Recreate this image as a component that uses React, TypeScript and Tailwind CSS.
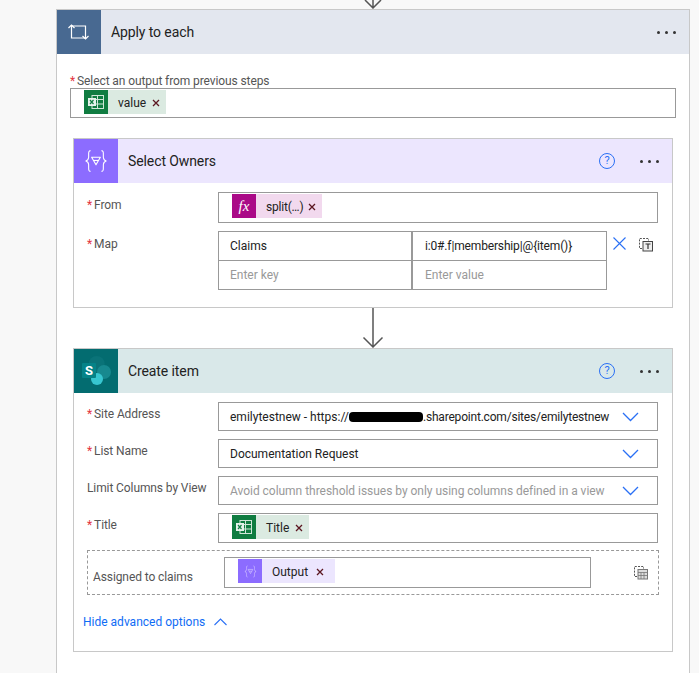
import type { ReactNode } from "react";

const fontFamily = "font-['Roboto','Noto_Sans',sans-serif]";

function LoopIcon() {
  return (
    <svg width="22" height="16" viewBox="0 0 22 16" fill="none" stroke="white" strokeWidth="1.2">
      <path d="M3.5 1v13H18" />
      <path d="M0.5 4l3-3 3 3" />
      <path d="M3.5 2h14v13" />
      <path d="M14.5 12l3 3 3-3" />
    </svg>
  );
}

function SelectIcon({ size = 24, color = "white" }: { size?: number; color?: string }) {
  return (
    <svg width={size} height={size} viewBox="0 0 22 22" fill="none" stroke={color} strokeWidth="1">
      <path d="M6 1.5C3.5 1.5 4.5 5 4.2 8c-.2 1.7-1 2.6-2.7 3 1.7.4 2.5 1.3 2.7 3 .3 3-.7 6.5 1.8 6.5" />
      <path d="M16 1.5c2.5 0 1.5 3.5 1.8 6.5.2 1.7 1 2.6 2.7 3-1.7.4-2.5 1.3-2.7 3-.3 3 .7 6.5-1.8 6.5" />
      <path d="M7 7.5h8L11 14.5z" strokeLinejoin="round" />
      <path d="M9 10.5h4" />
    </svg>
  );
}

function ExcelIcon() {
  return (
    <svg width="16" height="14" viewBox="0 0 16 14">
      <rect x="4" y="0.5" width="11.5" height="13" fill="none" stroke="#cfe6d8" strokeWidth="1" />
      <path d="M4 4.5h11.5M4 9h11.5M9.5 0.5v13" stroke="#cfe6d8" strokeWidth="1" />
      <rect x="0" y="3" width="8" height="8" fill="#e6f3ec" />
      <path d="M2 5l3.5 4M5.5 5L2 9" stroke="#107c41" strokeWidth="1.2" />
    </svg>
  );
}

function SharePointIcon() {
  return (
    <svg width="32" height="34" viewBox="0 0 32 34">
      <circle cx="16.7" cy="10" r="8" fill="#0a7378" />
      <circle cx="24" cy="18" r="7" fill="#17898f" />
      <circle cx="17" cy="25" r="6" fill="#37c6d0" />
      <rect x="2" y="9" width="14" height="15" rx="1" fill="#058388" />
      <text x="9" y="21" textAnchor="middle" fontSize="13" fontWeight="700" fill="white" className={fontFamily}>
        S
      </text>
    </svg>
  );
}

function PasteIcon({ children }: { children: ReactNode }) {
  return (
    <svg width="16" height="15" viewBox="0 0 16 15" fill="none">
      <path d="M4 11.5H1.5V1.5h9v2" stroke="#555" strokeWidth="1" strokeDasharray="2 1.2" />
      {children}
    </svg>
  );
}

function HelpIcon() {
  return (
    <div className="w-4 h-4 rounded-full border border-[#2a70f5] text-[#2a70f5] text-[11px] flex items-center justify-center mr-[25px]">
      ?
    </div>
  );
}

function Dots() {
  return (
    <div className="flex gap-[5px] mr-[13px]">
      <div className="w-[3px] h-[3px] rounded-full bg-[#333]" />
      <div className="w-[3px] h-[3px] rounded-full bg-[#333]" />
      <div className="w-[3px] h-[3px] rounded-full bg-[#333]" />
    </div>
  );
}

function Token(props: {
  icon: ReactNode;
  iconBg: string;
  bg: string;
  label: string;
  className?: string;
  labelClass?: string;
}) {
  return (
    <div className={`flex items-center h-6 ${props.bg} ${props.className ?? ""}`}>
      <div className={`w-6 h-6 flex items-center justify-center ${props.iconBg}`}>{props.icon}</div>
      <span className={`text-xs text-[#222] pl-[10px] pt-[1px] ${props.labelClass ?? ""}`}>{props.label}</span>
      <svg width="8" height="8" viewBox="0 0 8 8" stroke="#5b1620" strokeWidth="1.3" className="ml-[6px] mr-[6px] mt-[1px]">
        <path d="M1 1l6 6M7 1L1 7" />
      </svg>
    </div>
  );
}

function Label({ text, required, pt = "pt-[4px]" }: { text: string; required?: boolean; pt?: string }) {
  return (
    <div className={`w-[144px] pl-[13px] text-xs text-[#555] shrink-0 leading-[16px] ${pt} whitespace-nowrap tracking-[-0.1px]`}>
      {required && <span className="text-[#e3343f] mr-[2px]">*</span>}
      {text}
    </div>
  );
}

function Field({ h = "h-[29px]", children }: { h?: string; children: ReactNode }) {
  return (
    <div className={`flex-1 ${h} border border-[#999] flex items-center pl-[11px] pr-[18px] text-xs text-[#222]`}>
      {children}
    </div>
  );
}

// field that holds a dynamic-content token: the token sits near the top edge
function TokenField({ className, children }: { className: string; children: ReactNode }) {
  return <div className={`border border-[#999] flex items-start pt-[1px] pl-[13px] ${className}`}>{children}</div>;
}

function CardHeader(props: { icon: ReactNode; iconBg: string; bg: string; title: string; help?: boolean }) {
  return (
    <div className={`flex items-center h-[44px] ${props.bg}`}>
      <div className={`w-[44px] h-[44px] flex items-center justify-center ${props.iconBg}`}>{props.icon}</div>
      <h2 className="flex-1 text-[14px] text-[#222] pl-[10px] tracking-[-0.1px]">{props.title}</h2>
      {props.help && <HelpIcon />}
      <Dots />
    </div>
  );
}

function Chevron() {
  return (
    <svg width="17" height="10" viewBox="0 0 17 10" fill="none" stroke="#2a70f5" strokeWidth="1.3" className="ml-auto shrink-0">
      <path d="M1 1l7.5 7.5L16 1" />
    </svg>
  );
}

export default function App() {
  return (
    <div className={`${fontFamily} w-[699px] h-[673px] overflow-hidden bg-[#f8f8f8]`}>
      <div className="h-[9px] overflow-hidden flex justify-center pl-[47px]">
        <svg width="18" height="9" viewBox="0 0 18 9" fill="none" stroke="#555" strokeWidth="1.5">
          <path d="M9 0v8M1 0l8 8 8-8" />
        </svg>
      </div>
      <div className="ml-[56px] w-[634px] h-[700px] bg-white border border-[#c8c8c8]">
        <CardHeader icon={<LoopIcon />} iconBg="bg-[#486991]" bg="bg-[#e3e7ef]" title="Apply to each" />

        <div className="mt-[20px] h-[14px] ml-[13px] text-xs leading-[14px] text-[#555] tracking-[-0.1px]">
          <span className="text-[#e3343f] mr-[2px]">*</span>Select an output from previous steps
        </div>
        <TokenField className="ml-[13px] w-[606px] h-[30px]">
          <Token icon={<ExcelIcon />} iconBg="bg-[#107c41]" bg="bg-[#dbeae1]" label="value" />
        </TokenField>

        <div className="mt-[20px] ml-[16px] w-[600px] border border-[#c8c8c8]">
          <CardHeader icon={<SelectIcon />} iconBg="bg-[#8c6cff]" bg="bg-[#ece6fe]" title="Select Owners" help />
          <div className="pt-[9px] pr-[14px] h-[124px]">
            <div className="flex">
              <Label text="From" required pt="pt-[5px]" />
              <TokenField className="flex-1 h-[31px]">
                <Token
                  icon={<span className="font-['Liberation_Serif',serif] italic text-white text-[15px]">fx</span>}
                  iconBg="bg-[#aa0a87]"
                  bg="bg-[#f2d9ee]"
                  label="split(…)"
                  labelClass="tracking-[-0.2px] -mr-[1px]"
                />
              </TokenField>
            </div>
            <div className="flex mt-[8px]">
              <Label text="Map" required pt="pt-[5px]" />
              <div className="w-[389px] h-[59px] border border-[#999] text-xs grid grid-cols-[192px_1fr] grid-rows-2 shrink-0">
                <div className="flex items-center pl-[11px] text-[#222] border-b border-[#999]">Claims</div>
                <div className="flex items-center pl-[12px] text-[#222] border-b border-l-2 border-[#999] tracking-[-0.15px]">
                  i:0#.f|membership|@{"{item()}"}
                </div>
                <div className="flex items-center pl-[11px] text-[#999]">Enter key</div>
                <div className="flex items-center pl-[12px] text-[#999] border-l-2 border-[#999]">Enter value</div>
              </div>
              <svg width="13" height="13" viewBox="0 0 13 13" stroke="#2a70f5" strokeWidth="1.1" className="ml-[6px] mt-[6px]">
                <path d="M0.5 0.5l12 12M12.5 0.5l-12 12" />
              </svg>
              <div className="ml-[12px] mt-[6px]">
                <PasteIcon>
                  <rect x="5" y="4.5" width="9.5" height="9.5" fill="#eee" stroke="#444" />
                  <path d="M7.5 7h5M10 7v5" stroke="#333" strokeWidth="1.2" />
                </PasteIcon>
              </div>
            </div>
          </div>
        </div>

        <div className="ml-[16px] w-[600px] h-[40px] flex justify-center">
          <svg width="22" height="40" viewBox="0 0 22 40" fill="none" stroke="#555" strokeWidth="1.5">
            <path d="M11 0v39M1.5 29.5l9.5 9.5 9.5-9.5" />
          </svg>
        </div>

        <div className="ml-[16px] w-[600px] h-[304px] border border-[#c8c8c8]">
          <CardHeader icon={<SharePointIcon />} iconBg="bg-[#036c70]" bg="bg-[#d9e8e9]" title="Create item" help />
          <div className="pt-[9px] pr-[14px] flex flex-col gap-[8px]">
            <div className="flex">
              <Label text="Site Address" required />
              <Field>
                <span className="whitespace-nowrap">
                  emilytestnew - https://
                  <span className="inline-block w-[74px] h-[10px] bg-black rounded-[4px] align-[-1px]" />
                  <span className="tracking-[-0.2px]">.sharepoint.com/sites/emilytestnew</span>
                </span>
                <Chevron />
              </Field>
            </div>
            <div className="flex">
              <Label text="List Name" required />
              <Field>
                Documentation Request
                <Chevron />
              </Field>
            </div>
            <div className="flex">
              <Label text="Limit Columns by View" />
              <Field>
                <span className="text-[#999] whitespace-nowrap tracking-[-0.03px]">
                  Avoid column threshold issues by only using columns defined in a view
                </span>
                <Chevron />
              </Field>
            </div>
            <div className="flex">
              <Label text="Title" required />
              <TokenField className="flex-1 h-[30px]">
                <Token icon={<ExcelIcon />} iconBg="bg-[#107c41]" bg="bg-[#dbeae1]" label="Title" />
              </TokenField>
            </div>
            <div className="ml-[13px] mr-[-1px] -mt-[1px] h-[45px] border border-dashed border-[#999] flex items-center pl-[5px]">
              <div className="w-[131px] text-xs text-[#555] pt-[8px] tracking-[-0.1px]">Assigned to claims</div>
              <TokenField className="w-[367px] h-[31px]">
                <Token
                  icon={<SelectIcon size={13} color="#d9ccff" />}
                  iconBg="bg-[#8c6cff]"
                  bg="bg-[#ece6fe]"
                  label="Output"
                  labelClass="pr-[2px]"
                  className="pr-[5px]"
                />
              </TokenField>
              <div className="ml-[42px]">
                <PasteIcon>
                  <rect x="5" y="4.5" width="9.5" height="9.5" fill="#ddd" stroke="#777" />
                  <path d="M5 7.5h9.5M5 10.5h9.5M8 7.5v6.5M11 7.5v6.5" stroke="#777" strokeWidth="0.8" />
                </PasteIcon>
              </div>
            </div>
            <div className="flex items-center mt-[10px] h-[18px] pl-[9px] text-xs text-[#0f6cf5]">
              Hide advanced options
              <svg width="13" height="8" viewBox="0 0 13 8" fill="none" stroke="#2a70f5" strokeWidth="1.1" className="ml-[9px] -mt-[1px]">
                <path d="M0.5 7l6-6 6 6" />
              </svg>
            </div>
          </div>
        </div>
      </div>
    </div>
  );
}
